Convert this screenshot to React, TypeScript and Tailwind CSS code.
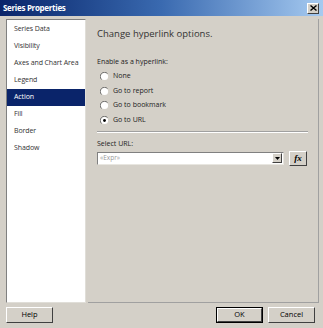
import React from "react";

const items = ["Series Data", "Visibility", "Axes and Chart Area", "Legend", "Action", "Fill", "Border", "Shadow"];

function Radio({ checked, label }: { checked?: boolean; label: string }) {
  return (
    <div className="flex items-center h-[14.7px] pl-[3px]">
      <svg width="9" height="9" viewBox="0 0 9 9" className="mr-[4px]">
        <circle cx="4.5" cy="4.5" r="3.6" fill="#fff" />
        <path d="M7.5 1.5 A4.2 4.2 0 0 0 1.5 7.5" fill="none" stroke="#707070" strokeWidth="1" />
        {checked && <circle cx="4.5" cy="4.5" r="1.4" fill="#000" />}
      </svg>
      <span>{label}</span>
    </div>
  );
}

function Btn({ label, def }: { label: string; def?: boolean }) {
  return (
    <div className={`h-[16px] w-[47px] flex items-center justify-center text-[7.5px] ${def ? "border border-black" : ""}`}>
      <div className="w-full h-full flex items-center justify-center border-t border-l border-t-white border-l-white border-r border-b border-r-[#404040] border-b-[#404040] bg-[#d4d0c8]">
        {label}
      </div>
    </div>
  );
}

export default function App() {
  return (
    <div
      className="w-[323px] h-[328px] bg-[#d4d0c8] flex flex-col text-black overflow-hidden"
      style={{ fontFamily: '"Open Sans", "Noto Sans", sans-serif' }}
    >
      <div className="h-[16px] shrink-0 flex items-center justify-between px-[3px] bg-gradient-to-r from-[#0a246a] via-[#3a6ab0] to-[#a6caf0]">
        <span className="text-white font-bold text-[8px] leading-none tracking-[-0.3px]">Series Properties</span>
        <div className="w-[12px] h-[11px] bg-[#d4d0c8] border-t border-l border-white border-r border-b border-r-[#404040] border-b-[#404040] flex items-center justify-center mr-[1px]">
          <svg width="7" height="6" viewBox="0 0 7 6">
            <path d="M0.5 0.5 L6.5 5.5 M6.5 0.5 L0.5 5.5" stroke="#000" strokeWidth="1.4" />
          </svg>
        </div>
      </div>
      <div className="flex flex-1 pl-[6px] pt-[3px] pr-[4px]">
        <div className="w-[80px] h-[284px] bg-white border-t border-l border-t-[#808080] border-l-[#808080] border-r border-b border-r-[#e0ded8] border-b-[#e0ded8] pt-[1px] text-[7px] tracking-[-0.1px]">
          {items.map((it) => (
            <div
              key={it}
              className={`h-[17px] flex items-center pl-[7px] whitespace-nowrap ${it === "Action" ? "bg-[#0a246a] text-white" : "text-[#333]"}`}
            >
              {it}
            </div>
          ))}
        </div>
        <div className="flex-1 ml-[2px] h-[284px] border-r border-b border-r-[#a0a0a0] border-b-[#a0a0a0] pl-[9px] pr-[10px] text-[7px]">
          <div className="text-[9.5px] text-[#333] mt-[7px] leading-[16px]">Change hyperlink options.</div>
          <div className="mt-[14px] leading-[12px] text-[#222]">Enable as a hyperlink:</div>
          <div className="mt-[1px] flex flex-col text-[#222]">
            <Radio label="None" />
            <Radio label="Go to report" />
            <Radio label="Go to bookmark" />
            <Radio checked label="Go to URL" />
          </div>
          <div className="mt-[3px] h-[2px] border-t border-t-[#a0a0a0] border-b border-b-white" />
          <div className="mt-[6px] leading-[10px] text-[#222]">Select URL:</div>
          <div className="mt-[2px] flex items-center">
            <div className="w-[187px] h-[13px] bg-white border-t border-l border-t-[#808080] border-l-[#808080] border-r border-b border-r-[#e8e6e0] border-b-[#e8e6e0] flex items-center justify-between">
              <span className="text-[6.5px] text-[#999] pl-[2px]">«Expr»</span>
              <div className="w-[10px] h-[10px] mr-[1px] bg-[#d4d0c8] border-t border-l border-white border-r border-b border-r-[#404040] border-b-[#404040] flex items-center justify-center">
                <svg width="5" height="3" viewBox="0 0 5 3">
                  <path d="M0 0 L5 0 L2.5 3 Z" fill="#000" />
                </svg>
              </div>
            </div>
            <div className="ml-[5px] w-[18px] h-[15px] bg-[#d4d0c8] border-t border-l border-white border-r border-b border-r-[#404040] border-b-[#404040] flex items-center justify-center">
              <span className="text-[9px] font-bold italic leading-none" style={{ fontFamily: '"Liberation Serif", serif' }}>
                fx
              </span>
            </div>
          </div>
        </div>
      </div>
      <div className="h-[25px] shrink-0 flex items-start justify-between pl-[6px] pr-[8px] pt-[4px]">
        <Btn label="Help" />
        <div className="flex gap-[5px]">
          <Btn label="OK" def />
          <Btn label="Cancel" />
        </div>
      </div>
    </div>
  );
}
